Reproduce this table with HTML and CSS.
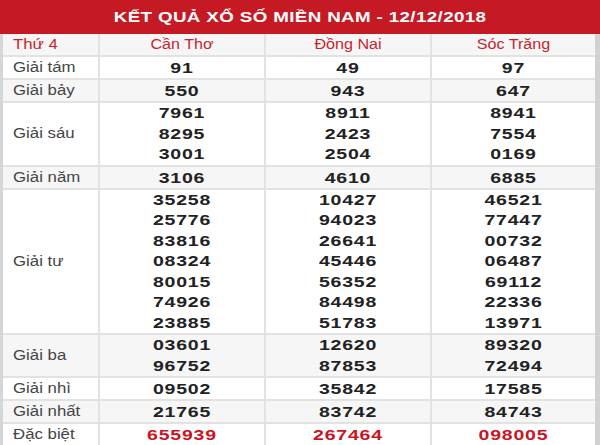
FILE: index.html
```html
<!DOCTYPE html>
<html lang="vi">
<head>
<meta charset="utf-8">
<link rel="stylesheet" href="styles.css">
</head>
<body>
<div class="board">
  <div class="title"><span class="t">KẾT QUẢ XỔ SỐ MIỀN NAM - 12/12/2018</span></div>
  <div class="frame">
    <table class="results">
      <colgroup>
        <col class="c-label"><col class="c-prov"><col class="c-prov"><col class="c-last">
      </colgroup>
      <tr class="head shade">
        <td class="label"><div class="lx">Thứ 4</div></td>
        <td><div class="hx">Cần Thơ</div></td>
        <td><div class="hx">Đồng Nai</div></td>
        <td><div class="hx">Sóc Trăng</div></td>
      </tr>
      <tr>
        <td class="label"><div class="lx">Giải tám</div></td>
        <td class="num"><div class="n">91</div></td><td class="num"><div class="n">49</div></td><td class="num"><div class="n">97</div></td>
      </tr>
      <tr class="shade">
        <td class="label"><div class="lx">Giải bảy</div></td>
        <td class="num"><div class="n">550</div></td><td class="num"><div class="n">943</div></td><td class="num"><div class="n">647</div></td>
      </tr>
      <tr class="multi">
        <td class="label"><div class="lx">Giải sáu</div></td>
        <td class="num"><div class="n">7961</div><div class="n">8295</div><div class="n">3001</div></td>
        <td class="num"><div class="n">8911</div><div class="n">2423</div><div class="n">2504</div></td>
        <td class="num"><div class="n">8941</div><div class="n">7554</div><div class="n">0169</div></td>
      </tr>
      <tr class="shade">
        <td class="label"><div class="lx">Giải năm</div></td>
        <td class="num"><div class="n">3106</div></td><td class="num"><div class="n">4610</div></td><td class="num"><div class="n">6885</div></td>
      </tr>
      <tr class="multi">
        <td class="label"><div class="lx">Giải tư</div></td>
        <td class="num"><div class="n">35258</div><div class="n">25776</div><div class="n">83816</div><div class="n">08324</div><div class="n">80015</div><div class="n">74926</div><div class="n">23885</div></td>
        <td class="num"><div class="n">10427</div><div class="n">94023</div><div class="n">26641</div><div class="n">45446</div><div class="n">56352</div><div class="n">84498</div><div class="n">51783</div></td>
        <td class="num"><div class="n">46521</div><div class="n">77447</div><div class="n">00732</div><div class="n">06487</div><div class="n">69112</div><div class="n">22336</div><div class="n">13971</div></td>
      </tr>
      <tr class="shade multi">
        <td class="label"><div class="lx">Giải ba</div></td>
        <td class="num"><div class="n">03601</div><div class="n">96752</div></td>
        <td class="num"><div class="n">12620</div><div class="n">87853</div></td>
        <td class="num"><div class="n">89320</div><div class="n">72494</div></td>
      </tr>
      <tr>
        <td class="label"><div class="lx">Giải nhì</div></td>
        <td class="num"><div class="n">09502</div></td><td class="num"><div class="n">35842</div></td><td class="num"><div class="n">17585</div></td>
      </tr>
      <tr class="shade">
        <td class="label"><div class="lx">Giải nhất</div></td>
        <td class="num"><div class="n">21765</div></td><td class="num"><div class="n">83742</div></td><td class="num"><div class="n">84743</div></td>
      </tr>
      <tr class="special">
        <td class="label"><div class="lx">Đặc biệt</div></td>
        <td class="num"><div class="n">655939</div></td><td class="num"><div class="n">267464</div></td><td class="num"><div class="n">098005</div></td>
      </tr>
    </table>
  </div>
</div>
</body>
</html>
```
FILE: styles.css
```css
html, body {
  margin: 0;
  padding: 0;
  background: #ffffff;
}

.board {
  width: 600px;
  height: 445px;
  overflow: hidden;
  font-family: "Liberation Sans", Arial, sans-serif;
}

.title {
  height: 34px;
  line-height: 34px;
  background: #c51a24;
  color: #ffffff;
  font-weight: bold;
  font-size: 15px;
  text-align: center;
}

.title .t {
  display: inline-block;
  transform: scaleX(1.25);
  letter-spacing: 0.3px;
}

.frame {
  border-left: 3px solid #d6d6d6;
  border-right: 5px solid #d2d2d2;
  height: 411px;
}

.results {
  width: 592px;
  border-collapse: collapse;
  table-layout: fixed;
}

.c-label { width: 96px; }
.c-prov { width: 166px; }
.c-last { width: 164px; }

.results td {
  border: 2px solid #e2e2e2;
  padding: 0;
  line-height: 21px;
  text-align: center;
  vertical-align: middle;
}

.results tr:first-child td { border-top: none; }
.results td:first-child { border-left: none; }
.results td:last-child { border-right: none; }

.multi .n { line-height: 20.5px; }

.shade td { background: #f6f6f6; }

.label {
  text-align: left !important;
  padding-left: 10px !important;
  font-size: 14px;
  color: #454545;
}

.lx {
  transform: scaleX(1.2);
  transform-origin: left center;
  white-space: nowrap;
}

.head td {
  color: #c8242e;
  font-size: 14px;
}

.hx {
  transform: scaleX(1.15);
  transform-origin: center;
}

.num {
  font-weight: bold;
  font-size: 15px;
  color: #222222;
}

.n {
  transform: scaleX(1.3);
  transform-origin: center;
  letter-spacing: 0.6px;
}

.special .num { color: #cc1422; }
```
